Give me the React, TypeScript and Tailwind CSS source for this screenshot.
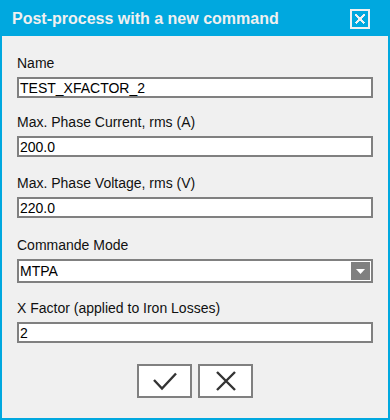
import React from "react";

const Field = ({ label, value, className }: { label: string; value: string; className?: string }) => (
  <div className={className}>
    <div className="h-[16px] leading-[16px] text-[14px] text-[#111]">{label}</div>
    <div className="mt-[6px] h-[21px] w-[356px] border-2 border-[#808080] bg-white flex items-center pl-[1px] text-[14px] leading-[16px] text-black">
      {value}
    </div>
  </div>
);

export default function App() {
  return (
    <div
      className="w-[390px] h-[420px] bg-[#00a8df] flex flex-col"
      style={{ fontFamily: '"Liberation Sans", Arial, sans-serif' }}
    >
      <div className="h-[36px] flex items-center justify-between pl-[12px] pr-[20px] shrink-0">
        <div className="text-[16px] font-bold text-[#f0f0f0] leading-none mt-[1px]">Post-process with a new command</div>
        <div className="w-[20px] h-[20px] border-2 border-[#f0f0f0] flex items-center justify-center mt-[2px]">
          <svg width="12" height="12" viewBox="0 0 12 12">
            <path d="M1.5 1.5 L10.5 10.5 M10.5 1.5 L1.5 10.5" stroke="#f0f0f0" strokeWidth="2" shapeRendering="crispEdges" />
          </svg>
        </div>
      </div>
      <div className="flex-1 mx-[2px] mb-[2px] bg-[#f0f0f0] px-[15px] pt-[19px] flex flex-col">
        <Field label="Name" value="TEST_XFACTOR_2" />
        <Field className="mt-[16px]" label="Max. Phase Current, rms (A)" value="200.0" />
        <Field className="mt-[18px]" label="Max. Phase Voltage, rms (V)" value="220.0" />
        <div className="mt-[19px]">
          <div className="h-[16px] leading-[16px] text-[14px] text-[#111]">Commande Mode</div>
          <div className="mt-[6px] h-[24px] w-[356px] border-2 border-[#808080] bg-white flex items-center justify-between pl-[1px] pr-[1px] text-[14px] text-black">
            <span>MTPA</span>
            <div className="w-[19px] h-[18px] bg-[#808080] flex items-center justify-center">
              <svg width="9" height="5" viewBox="0 0 9 5">
                <path d="M0 0 H9 L4.5 5 Z" fill="#ffffff" />
              </svg>
            </div>
          </div>
        </div>
        <Field className="mt-[17px]" label="X Factor (applied to Iron Losses)" value="2" />
        <div className="mt-[21px] flex justify-center gap-[6px]">
          <button className="w-[55px] h-[34px] border-2 border-[#808080] bg-white flex items-center justify-center">
            <svg width="26" height="20" viewBox="0 0 26 20">
              <path d="M2 9 L10 17.5 L24 2.5" fill="none" stroke="#333" strokeWidth="2.4" />
            </svg>
          </button>
          <button className="w-[55px] h-[34px] border-2 border-[#808080] bg-white flex items-center justify-center">
            <svg width="22" height="22" viewBox="0 0 22 22">
              <path d="M2 2 L20 20 M20 2 L2 20" fill="none" stroke="#333" strokeWidth="2.4" />
            </svg>
          </button>
        </div>
      </div>
    </div>
  );
}
